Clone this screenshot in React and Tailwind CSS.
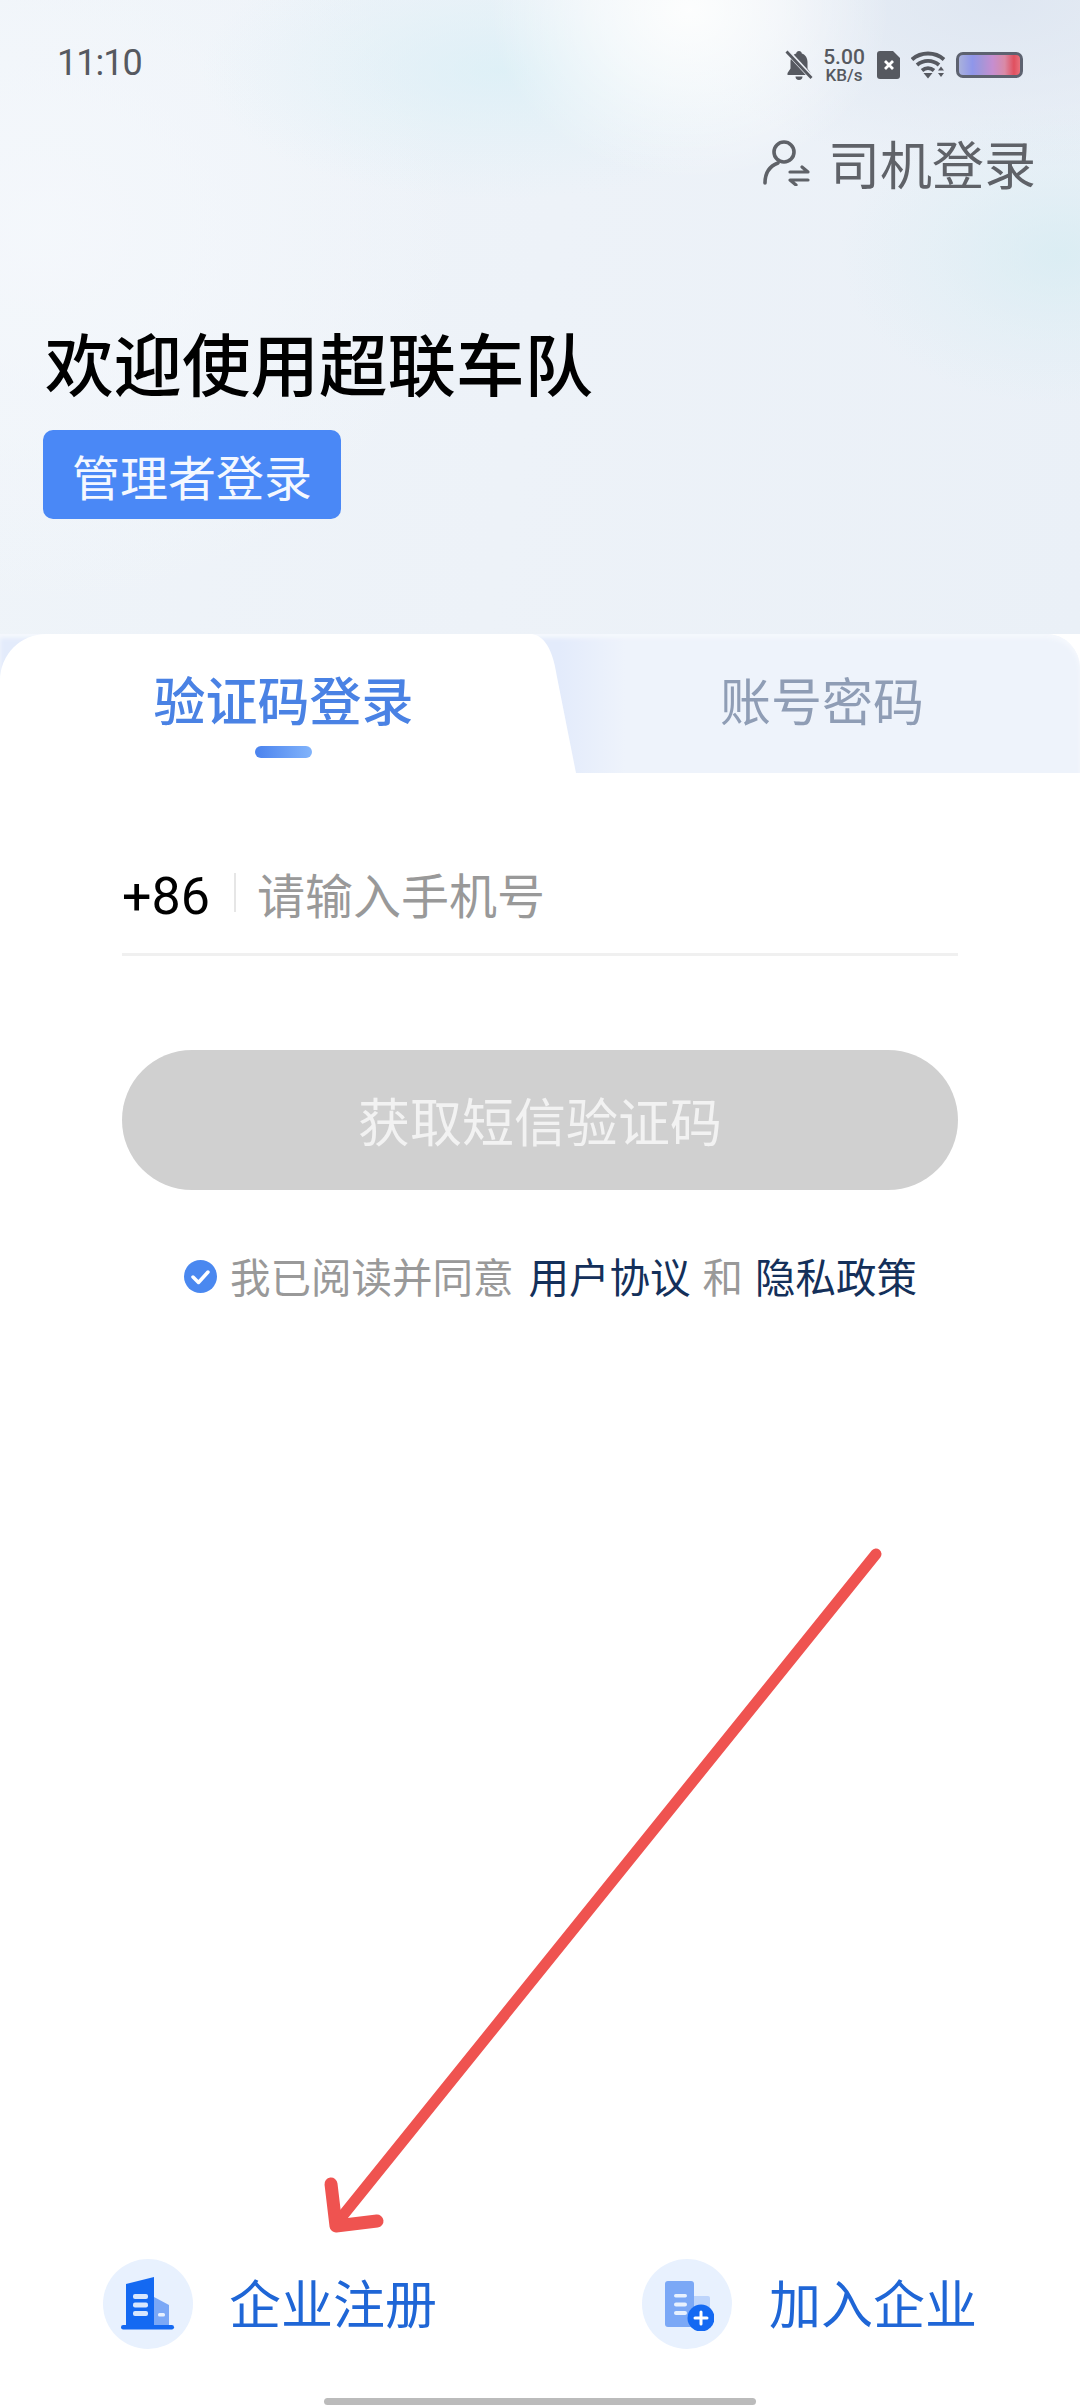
export default function App() {
  return (
    <div className="relative flex h-[2408px] w-[1080px] flex-col overflow-hidden bg-white font-['Noto_Sans_CJK_SC','Noto_Sans',sans-serif]">
      {/* hero */}
      <div className="flex h-[634px] flex-col bg-[radial-gradient(ellipse_200px_170px_at_690px_10px,rgba(255,255,254,0.9)_0%,rgba(255,255,254,0.55)_45%,rgba(255,255,254,0)_100%),radial-gradient(ellipse_300px_130px_at_500px_70px,rgba(216,239,246,0.7)_0%,rgba(216,239,246,0.28)_55%,rgba(216,239,246,0)_100%),radial-gradient(ellipse_220px_150px_at_1060px_255px,rgba(214,236,242,0.75)_0%,rgba(214,236,242,0.28)_55%,rgba(214,236,242,0)_100%),radial-gradient(ellipse_340px_170px_at_1000px_0px,rgba(222,230,241,0.95)_0%,rgba(222,230,241,0.4)_60%,rgba(222,230,241,0)_100%),radial-gradient(ellipse_420px_380px_at_40px_230px,rgba(245,248,252,0.85)_0%,rgba(245,248,252,0.42)_55%,rgba(245,248,252,0)_100%),linear-gradient(100deg,#eff4f9_0%,#edf2f8_50%,#eaf0f7_100%)]">
        {/* status bar */}
        <div className="mt-[36px] flex h-[47px] items-end justify-between pl-[57px] pr-[57px]">
          <span className="font-['Roboto',sans-serif] text-[36px] font-normal leading-[40px] tracking-[-1px] text-[#565960]">11:10</span>
          <div className="flex items-center">
            <svg className="h-[30px] w-[28px]" viewBox="0 0 28 30">
              <path d="M14 1c-1.600 0-2.700 1-2.800 2.400C7.400 4.600 5.500 8 5.500 12v6.500L2.500 23v2h23v-2l-3-4.500V12c0-4-1.900-7.400-5.700-8.600C16.700 2 15.600 1 14 1z" fill="#565960" />
              <path d="M10.500 26.500a3.500 3.500 0 0 0 7 0z" fill="#565960" />
              <path d="M2 1l25 27" stroke="#eef1f7" strokeWidth="5" />
              <path d="M1.500 1.500l25 26.500" stroke="#565960" strokeWidth="2.800" />
            </svg>
            <div className="ml-[7px] flex w-[48px] flex-col items-center font-['Roboto',sans-serif] font-medium text-[#565960]">
              <span className="text-[21px] leading-[21px]">5.00</span>
              <span className="text-[17px] leading-[15px]">KB/s</span>
            </div>
            <svg className="ml-[9px] h-[30px] w-[24px]" viewBox="0 0 24 30">
              <path d="M3 1h13l7 7v18a3 3 0 0 1-3 3H3a3 3 0 0 1-3-3V4a3 3 0 0 1 3-3z" fill="#565960" />
              <path d="M8 11l8 8M16 11l-8 8" stroke="#fff" strokeWidth="2.800" />
            </svg>
            <svg className="ml-[10px] h-[28px] w-[36px]" viewBox="0 0 36 28">
              <path d="M1 8.500C10 .500 24 .500 33 8.500" fill="none" stroke="#565960" strokeWidth="3.800" />
              <path d="M6 14c6.500-5.500 15.500-5.500 22 0" fill="none" stroke="#565960" strokeWidth="3.800" />
              <path d="M11 19.500c3.600-3 8.400-3 12 0" fill="none" stroke="#565960" strokeWidth="3.800" />
              <path d="M12.500 22h9l-4.500 5.500z" fill="#565960" />
              <path d="M30 15.500l3 4h-6zM30 26l3-4h-6z" fill="#565960" />
            </svg>
            <div className="ml-[9px] h-[26px] w-[67px] rounded-[7px] border-[3px] border-[#5d6270] bg-[linear-gradient(90deg,#a9b1dc_0%,#8f96ea_22%,#a695d8_38%,#c58ed0_55%,#d98aa6_75%,#e0505f_90%,#e8707c_100%)]" />
          </div>
        </div>
        {/* driver login */}
        <div className="mt-[53px] flex items-center justify-end pr-[44px]">
          <svg className="mr-[18px] h-[46px] w-[47px]" viewBox="0 0 47 46" fill="none" stroke="#5f6268" strokeWidth="3.600" strokeLinecap="round" strokeLinejoin="round">
            <circle cx="21" cy="12" r="10" />
            <path d="M2 43c0-10 5-17 13-20" />
            <path d="M27 32h18l-6-5M45 40H27l6 5" strokeWidth="3.200" />
          </svg>
          <span className="text-[52px] leading-[54px] text-[#5f6268]">司机登录</span>
        </div>
        {/* title */}
        <h1 className="mt-[134px] pl-[45px] text-[68.500px] font-medium leading-[76px] text-black">欢迎使用超联车队</h1>
        <div className="ml-[43px] mt-[30px] flex h-[89px] w-[298px] items-center justify-center rounded-[10px] bg-[#4a88f6] text-[48px] leading-[54px] text-[#f4f8ff]">管理者登录</div>
      </div>

      {/* tabs */}
      <div className="flex h-[139px] items-stretch rounded-tr-[34px] bg-[linear-gradient(90deg,#e3ebfb_0px,#e3ebfb_560px,#eef3fb_625px,#eef3fb_100%)] shadow-[inset_0_4px_4px_#f5f8fd]">
        <div className="flex w-[530px] flex-col items-center rounded-tl-[46px] bg-white pl-[37px]">
          <span className="mt-[35px] text-[52px] font-medium leading-[60px] text-[#4a82e4]">验证码登录</span>
          <div className="mt-[17px] h-[12px] w-[57px] rounded-[6px] bg-[linear-gradient(90deg,#4a82ee,#82b4fb)]" />
        </div>
        <svg className="h-[139px] w-[46px] shrink-0" viewBox="0 0 46 139">
          <path d="M0 0C10 0 22 8 27 43L46 139H0z" fill="#fff" />
        </svg>
        <div className="flex flex-1 justify-center pr-[12px]">
          <span className="mt-[35px] text-[51px] leading-[60px] text-[#8f9db5]">账号密码</span>
        </div>
      </div>

      {/* form */}
      <div className="mt-[63px] flex flex-col px-[122px]">
        <div className="flex h-[120px] items-center border-b-[3px] border-[#f0f0f0] pb-[4px]">
          <span className="mt-[9px] font-['Roboto',sans-serif] text-[52px] leading-[56px] text-black">+86</span>
          <div className="ml-[24px] h-[39px] w-[2px] bg-[#e6e6e6]" />
          <span className="ml-[21px] text-[48px] leading-[56px] text-[#999999]">请输入手机号</span>
        </div>
        <div className="mt-[94px] flex h-[140px] items-center justify-center rounded-[70px] bg-[#d0d0d0] text-[52px] leading-[60px] text-[#f2f2f2]">获取短信验证码</div>
        <div className="mt-[61px] flex items-center pl-[62px] text-[40.500px] leading-[50px] text-[#999999]">
          <svg className="h-[33px] w-[33px]" viewBox="0 0 33 33">
            <circle cx="16.500" cy="16.500" r="16.500" fill="#4a88f0" />
            <path d="M9 17l5.500 5.500L24 12" fill="none" stroke="#fff" strokeWidth="3.500" strokeLinecap="round" strokeLinejoin="round" />
          </svg>
          <span className="ml-[13px]">我已阅读并同意</span>
          <span className="ml-[15px] text-[#14305a]">用户协议</span>
          <span className="ml-[12px]">和</span>
          <span className="ml-[12px] text-[#14305a]">隐私政策</span>
        </div>
      </div>

      <div className="flex-1" />

      {/* bottom actions */}
      <div className="flex pl-[103px]">
        <div className="flex w-[539px] items-center">
          <div className="flex h-[90px] w-[90px] items-center justify-center rounded-full bg-[#e8f1fe]">
            <svg className="h-[54px] w-[54px]" viewBox="0 0 54 54">
              <path d="M33 20l15 8v22H33z" fill="#7ba8f6" />
              <path d="M5 7l28-7v50H5z" fill="#1469f2" />
              <rect x="12" y="17" width="15" height="5" rx="2" fill="#d9e7fd" />
              <rect x="12" y="25.500" width="15" height="5" rx="2" fill="#d9e7fd" />
              <rect x="12" y="34" width="15" height="5" rx="2" fill="#d9e7fd" />
              <rect x="37" y="36" width="7" height="3.500" rx="1.500" fill="#e8f1fe" />
              <rect x="0" y="48" width="53" height="4.500" rx="2.200" fill="#1469f2" />
            </svg>
          </div>
          <span className="ml-[36px] pb-[4px] text-[52px] leading-[56px] text-[#1f66d6]">企业注册</span>
        </div>
        <div className="flex items-center">
          <div className="flex h-[90px] w-[90px] items-center justify-center rounded-full bg-[#e8f1fe]">
            <svg className="h-[54px] w-[54px]" viewBox="0 0 54 54">
              <rect x="32" y="19" width="18" height="22" rx="2" fill="#bdd4fb" />
              <rect x="5" y="4" width="29" height="46" rx="3" fill="#7ba8f6" />
              <rect x="14" y="17" width="13" height="3.500" rx="1.700" fill="#e8f1fe" />
              <rect x="14" y="25.500" width="13" height="4" rx="2" fill="#e8f1fe" />
              <rect x="14" y="34" width="13" height="4" rx="2" fill="#e8f1fe" />
              <circle cx="41" cy="41" r="13.500" fill="#1469f2" />
              <path d="M35 41h12M41 35v12" stroke="#fff" strokeWidth="3" strokeLinecap="round" />
            </svg>
          </div>
          <span className="ml-[37px] pb-[4px] text-[52px] leading-[56px] text-[#1f66d6]">加入企业</span>
        </div>
      </div>

      {/* home bar */}
      <div className="mb-[3px] mt-[49px] flex justify-center">
        <div className="h-[7px] w-[432px] rounded-[4px] bg-[#bbbbbb]" />
      </div>

      {/* red annotation arrow */}
      <svg className="absolute left-0 top-0 h-[2408px] w-[1080px]" viewBox="0 0 1080 2408" fill="none" stroke="#ef5350" strokeLinecap="round" strokeLinejoin="round">
        <path d="M876 1554L336 2224" strokeWidth="11" />
        <path d="M331 2184L336 2226L377 2221" strokeWidth="13" />
      </svg>
    </div>
  );
}
